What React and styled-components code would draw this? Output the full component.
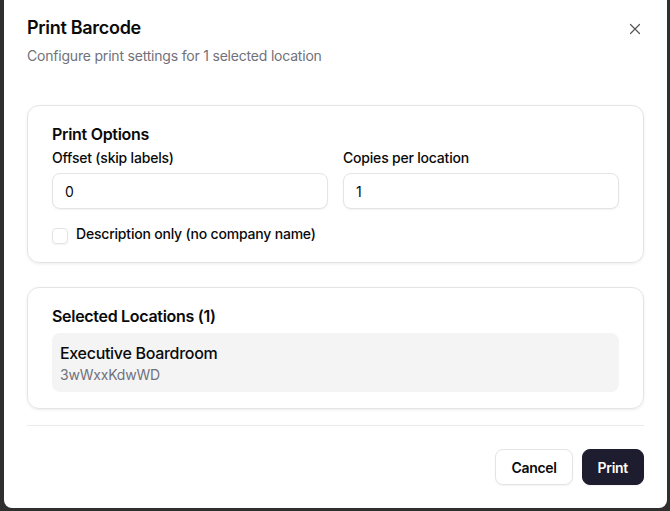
import React from "react";
import styled, { createGlobalStyle } from "styled-components";

const Global = createGlobalStyle`
  html, body { margin: 0; padding: 0; background: #2f2f2f; }
  body { font-family: Inter, "Noto Sans", Arial, sans-serif; color: #0a0a0a; -webkit-font-smoothing: antialiased; letter-spacing: -0.2px; }
  * { box-sizing: border-box; }
`;

const Screen = styled.div`
  width: 670px;
  height: 511px;
  padding: 0 3px 3px 4px;
  display: flex;
`;

const Dialog = styled.div`
  flex: 1;
  background: #fff;
  border-radius: 0 0 8px 8px;
  padding: 14px 23px 0 23px;
  display: flex;
  flex-direction: column;
  position: relative;
`;

const Title = styled.h2`
  margin: 0;
  font-size: 18px;
  line-height: 28px;
  font-weight: 600;
  letter-spacing: -0.3px;
`;

const Description = styled.p`
  margin: 4px 0 0;
  font-size: 14px;
  line-height: 20px;
  color: #71717a;
`;

const Close = styled.button`
  position: absolute;
  top: 22px;
  right: 25px;
  width: 14px;
  height: 14px;
  padding: 0;
  border: none;
  background: none;
  color: #555;
  display: flex;
  align-items: center;
  justify-content: center;
`;

const Card = styled.section`
  border: 1px solid #e4e4e7;
  border-radius: 12px;
  box-shadow: 0 1px 3px rgba(0, 0, 0, 0.08);
  padding: ${(p) => p.$pad};
  display: flex;
  flex-direction: column;
  margin-top: ${(p) => p.$mt}px;
`;

const CardTitle = styled.h3`
  margin: 0;
  font-size: 16px;
  line-height: 24px;
  font-weight: 600;
  letter-spacing: -0.3px;
`;

const Grid = styled.div`
  display: grid;
  grid-template-columns: 1fr 1fr;
  gap: 15px;
  margin-top: 2px;
`;

const Field = styled.div`
  display: flex;
  flex-direction: column;
  gap: 5px;
`;

const Label = styled.label`
  font-size: 14px;
  line-height: 20px;
  font-weight: 500;
`;

const Input = styled.input`
  height: 36px;
  border: 1px solid #e4e4e7;
  border-radius: 8px;
  padding: 0 12px;
  font: inherit;
  font-size: 14px;
  color: #0a0a0a;
  box-shadow: 0 1px 2px rgba(0, 0, 0, 0.05);
  outline: none;
`;

const CheckRow = styled.label`
  display: flex;
  align-items: center;
  gap: 8px;
  margin-top: 15px;
  font-size: 14px;
  line-height: 20px;
  font-weight: 500;
`;

const Box = styled.span`
  width: 16px;
  height: 16px;
  border: 1px solid #e4e4e7;
  border-radius: 4px;
  box-shadow: 0 1px 2px rgba(0, 0, 0, 0.05);
  margin-top: 4px;
`;

const Location = styled.div`
  margin-top: 5px;
  background: #f4f4f5;
  border-radius: 8px;
  padding: 8px 8px 7px;
  display: flex;
  flex-direction: column;
`;

const LocName = styled.div`
  font-size: 16px;
  line-height: 24px;
  font-weight: 500;
  letter-spacing: -0.3px;
`;

const LocId = styled.div`
  font-size: 14px;
  line-height: 20px;
  color: #71717a;
`;

const Separator = styled.hr`
  margin: 16px 0 0;
  border: none;
  border-top: 1px solid #ececee;
`;

const Footer = styled.div`
  display: flex;
  justify-content: flex-end;
  gap: 9px;
  margin-top: 23px;
`;

const Button = styled.button`
  height: 36px;
  padding: 0 15px;
  border-radius: 8px;
  font: inherit;
  font-size: 14px;
  font-weight: 600;
  letter-spacing: -0.3px;
  border: 1px solid ${(p) => (p.$primary ? "#1d1d2f" : "#e4e4e7")};
  background: ${(p) => (p.$primary ? "#1d1d2f" : "#fff")};
  color: ${(p) => (p.$primary ? "#fff" : "#0a0a0a")};
  box-shadow: 0 1px 2px rgba(0, 0, 0, 0.05);
`;

export default function App() {
  return (
    <Screen>
      <Global />
      <Dialog>
        <Title>Print Barcode</Title>
        <Description>Configure print settings for 1 selected location</Description>
        <Close aria-label="Close">
          <svg width="12" height="12" viewBox="0 0 12 12" fill="none" stroke="currentColor" strokeWidth="1.2" strokeLinecap="round">
            <path d="M1.5 1.5l9 9M10.5 1.5l-9 9" />
          </svg>
        </Close>
        <Card $mt={39} $pad="16px 24px 18px">
          <CardTitle>Print Options</CardTitle>
          <Grid>
            <Field>
              <Label>Offset (skip labels)</Label>
              <Input defaultValue="0" />
            </Field>
            <Field>
              <Label>Copies per location</Label>
              <Input defaultValue="1" />
            </Field>
          </Grid>
          <CheckRow>
            <Box />
            Description only (no company name)
          </CheckRow>
        </Card>
        <Card $mt={24} $pad="16px 24px 16px">
          <CardTitle>Selected Locations (1)</CardTitle>
          <Location>
            <LocName>Executive Boardroom</LocName>
            <LocId>3wWxxKdwWD</LocId>
          </Location>
        </Card>
        <Separator />
        <Footer>
          <Button>Cancel</Button>
          <Button $primary>Print</Button>
        </Footer>
      </Dialog>
    </Screen>
  );
}
